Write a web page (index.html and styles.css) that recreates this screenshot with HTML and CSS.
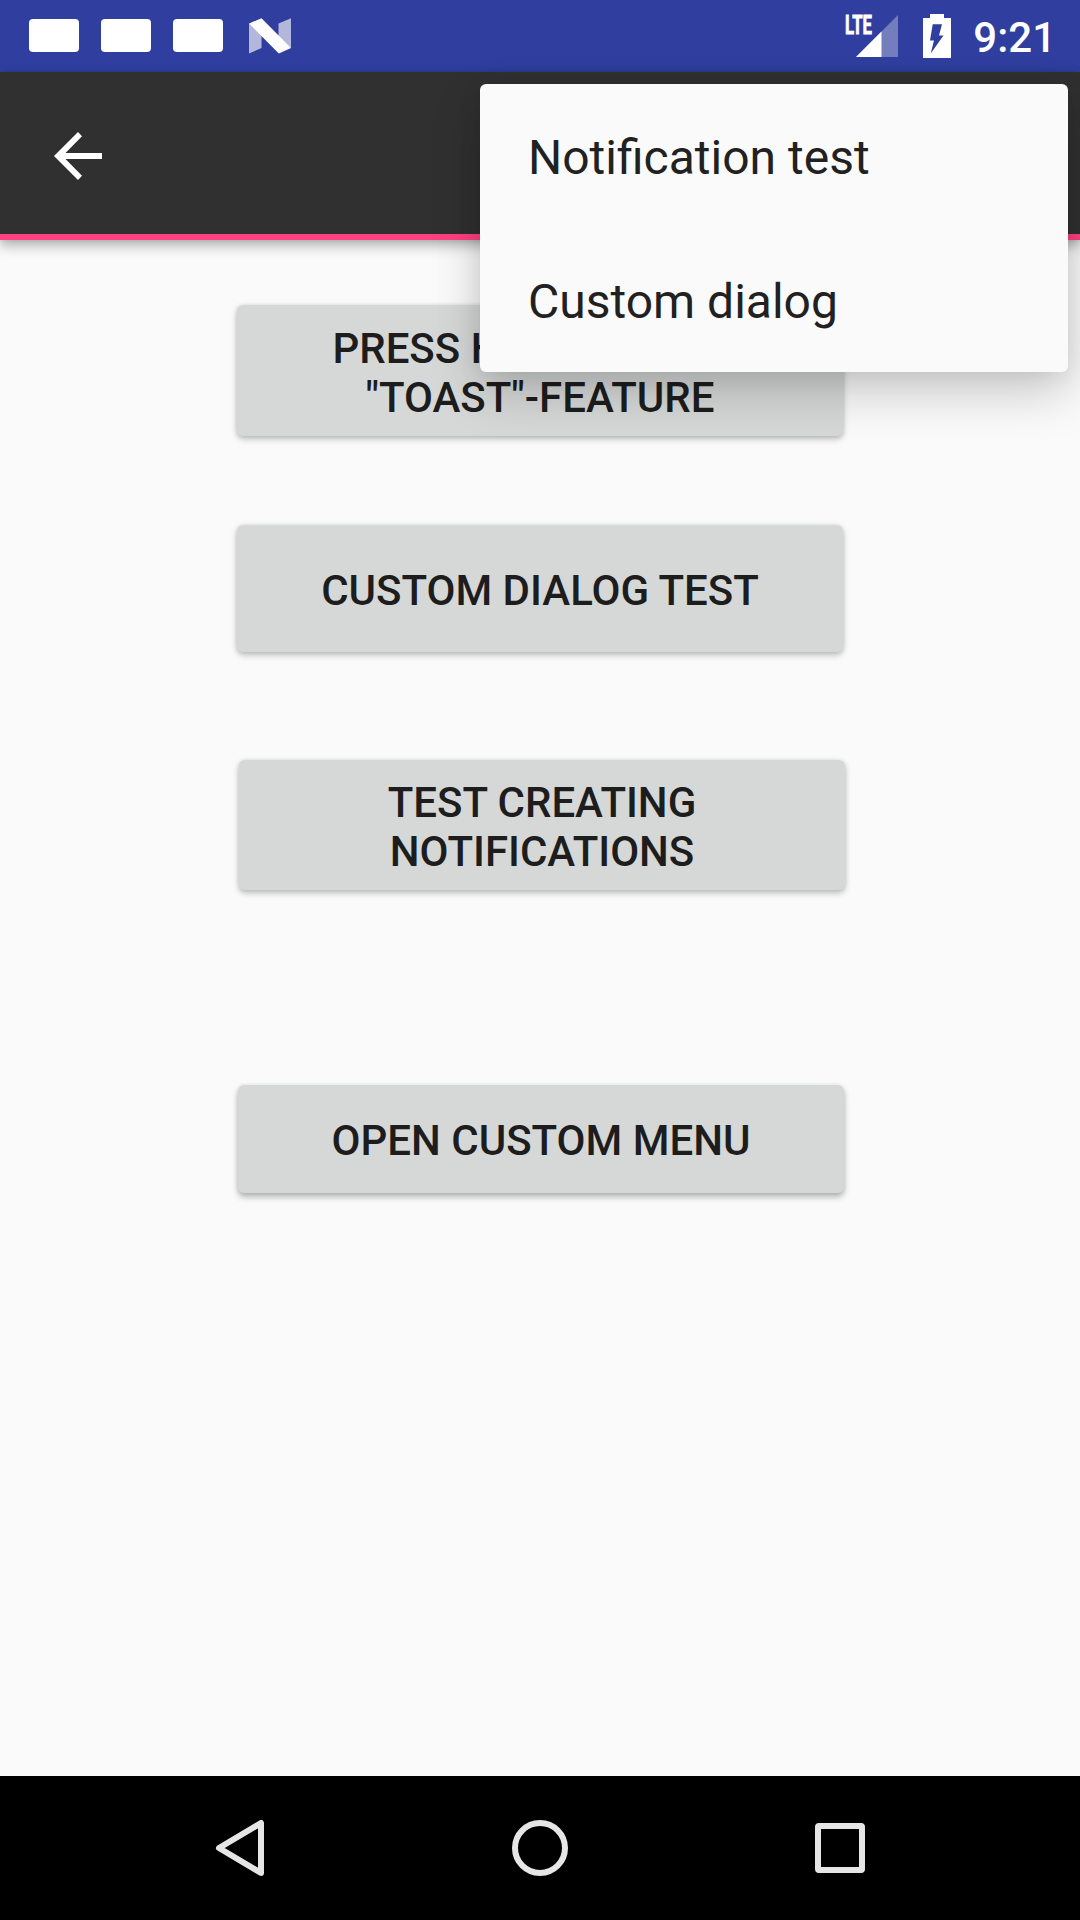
FILE: index.html
```html
<!DOCTYPE html>
<html lang="en">
<head>
<meta charset="utf-8">
<title>Feature tests</title>
<link rel="stylesheet" href="styles.css">
</head>
<body>
<div class="screen">
  <header class="status-bar">
    <div class="notifications">
      <span class="notice"></span>
      <span class="notice"></span>
      <span class="notice"></span>
      <svg class="nougat" width="42" height="36" viewBox="0 0 42 36">
        <path d="M0 5.500L12.500 14V30L0 35.500Z M29.500 5.500L42 .3V30L29.500 22Z" fill="#b3b7dc"/>
        <path d="M0 5.500L12.500 .3L42 30L29.800 35.500Z" fill="#fff"/>
      </svg>
    </div>
    <div class="system-icons">
      <svg class="signal" width="54" height="50" viewBox="0 -6 54 50">
        <path d="M11 43H53V1Z" fill="#757ebd"/>
        <path d="M11 43H36.500V17.500Z" fill="#fff"/>
        <text class="lte" x="0" y="19.500" textLength="27" lengthAdjust="spacingAndGlyphs">LTE</text>
      </svg>
      <svg class="battery" width="28" height="44" viewBox="0 0 28 44">
        <path fill-rule="evenodd" d="M7 0H21V4H28V44H0V4H7ZM9.700 10.300L7 26.500H11L7.700 39.500L20.500 21.500H16L19 10.300Z" fill="#fff"/>
      </svg>
      <span class="clock">9:21</span>
    </div>
  </header>
  <nav class="app-bar">
    <svg width="48" height="48" viewBox="0 0 48 48">
      <path d="M48 21V27H11.500L28 43.800L24 48L0 24L24 0L28 4.200L11.500 21Z" fill="#fff"/>
    </svg>
  </nav>
  <main class="content">
    <button class="action toast">Press here to test<br>"toast"-feature</button>
    <button class="action dialog">Custom dialog test</button>
    <button class="action notify">Test creating<br>notifications</button>
    <button class="action menu">Open custom menu</button>
  </main>
  <footer class="nav-bar">
    <svg width="56" height="56" viewBox="0 0 56 56"><path d="M49 3V53L7 28Z"/></svg>
    <svg width="56" height="56" viewBox="0 0 56 56"><circle cx="28" cy="28" r="25"/></svg>
    <svg width="56" height="56" viewBox="0 0 56 56"><rect x="6" y="6" width="44" height="44" rx="1"/></svg>
  </footer>
  <div class="popup">
    <div class="popup-item">Notification test</div>
    <div class="popup-item">Custom dialog</div>
  </div>
</div>
</body>
</html>
```
FILE: styles.css
```css
* { box-sizing: border-box; }
body { margin: 0; font-family: Roboto, sans-serif; }
.screen {
  position: relative;
  width: 1080px;
  height: 1920px;
  display: flex;
  flex-direction: column;
  overflow: hidden;
  background: #fafafa;
}
.status-bar {
  height: 72px;
  flex: none;
  display: flex;
  justify-content: space-between;
  background: #303f9f;
}
.notifications { display: flex; gap: 22px; padding: 18px 0 0 29px; }
.notice { width: 50px; height: 33px; margin-top: 1px; border-radius: 4px; background: #fff; }
.nougat { margin-left: 4px; }
.system-icons { display: flex; align-items: flex-start; padding: 8px 24px 0 0; }
.lte { font-size: 26px; font-weight: 700; fill: #fff; stroke: #fff; stroke-width: .8; }
.battery { margin: 6px 0 0 24px; }
.clock {
  margin: 5px 0 0 22px;
  font-size: 42px;
  line-height: 49px;
  font-weight: 500;
  color: #fff;
}
.app-bar {
  height: 168px;
  flex: none;
  display: flex;
  padding: 60px 54px;
  background: #303030;
  border-bottom: 6px solid #ff4081;
  box-shadow: 0 6px 12px rgba(0, 0, 0, .28), 0 0 6px rgba(0, 0, 0, .12);
}
.content {
  flex: 1;
  display: flex;
  flex-direction: column;
  align-items: flex-start;
  padding: 65px 0 0 237px;
}
.action {
  width: 606px;
  padding: 3px 0 0;
  border: 0;
  border-radius: 6px;
  background: #d6d8d7;
  color: #1d1d1d;
  font: 500 42px/49px Roboto, sans-serif;
  text-transform: uppercase;
  box-shadow: 0 3px 6px rgba(0, 0, 0, .25), 0 0 4px rgba(0, 0, 0, .08);
}
.toast { height: 131px; padding-top: 5px; }
.dialog { height: 127px; margin-top: 89px; }
.notify { height: 130px; margin: 108px 0 0 2px; }
.menu { height: 108px; margin: 195px 0 0 1px; box-shadow: 0 4px 6px rgba(0, 0, 0, .28), 0 0 4px rgba(0, 0, 0, .08); }
.nav-bar {
  height: 144px;
  flex: none;
  display: flex;
  justify-content: center;
  align-items: center;
  gap: 244px;
  background: #000;
}
.nav-bar svg { fill: none; stroke: #e6e6e6; stroke-width: 6; stroke-linejoin: round; }
.popup {
  position: absolute;
  top: 84px;
  right: 12px;
  width: 588px;
  border-radius: 6px;
  background: #fafafa;
  box-shadow: 0 20px 50px rgba(0, 0, 0, .2), 0 3px 24px rgba(0, 0, 0, .08);
}
.popup-item {
  height: 144px;
  padding: 46px 48px 0;
  font-size: 48px;
  line-height: 56px;
  color: #212121;
}
```
